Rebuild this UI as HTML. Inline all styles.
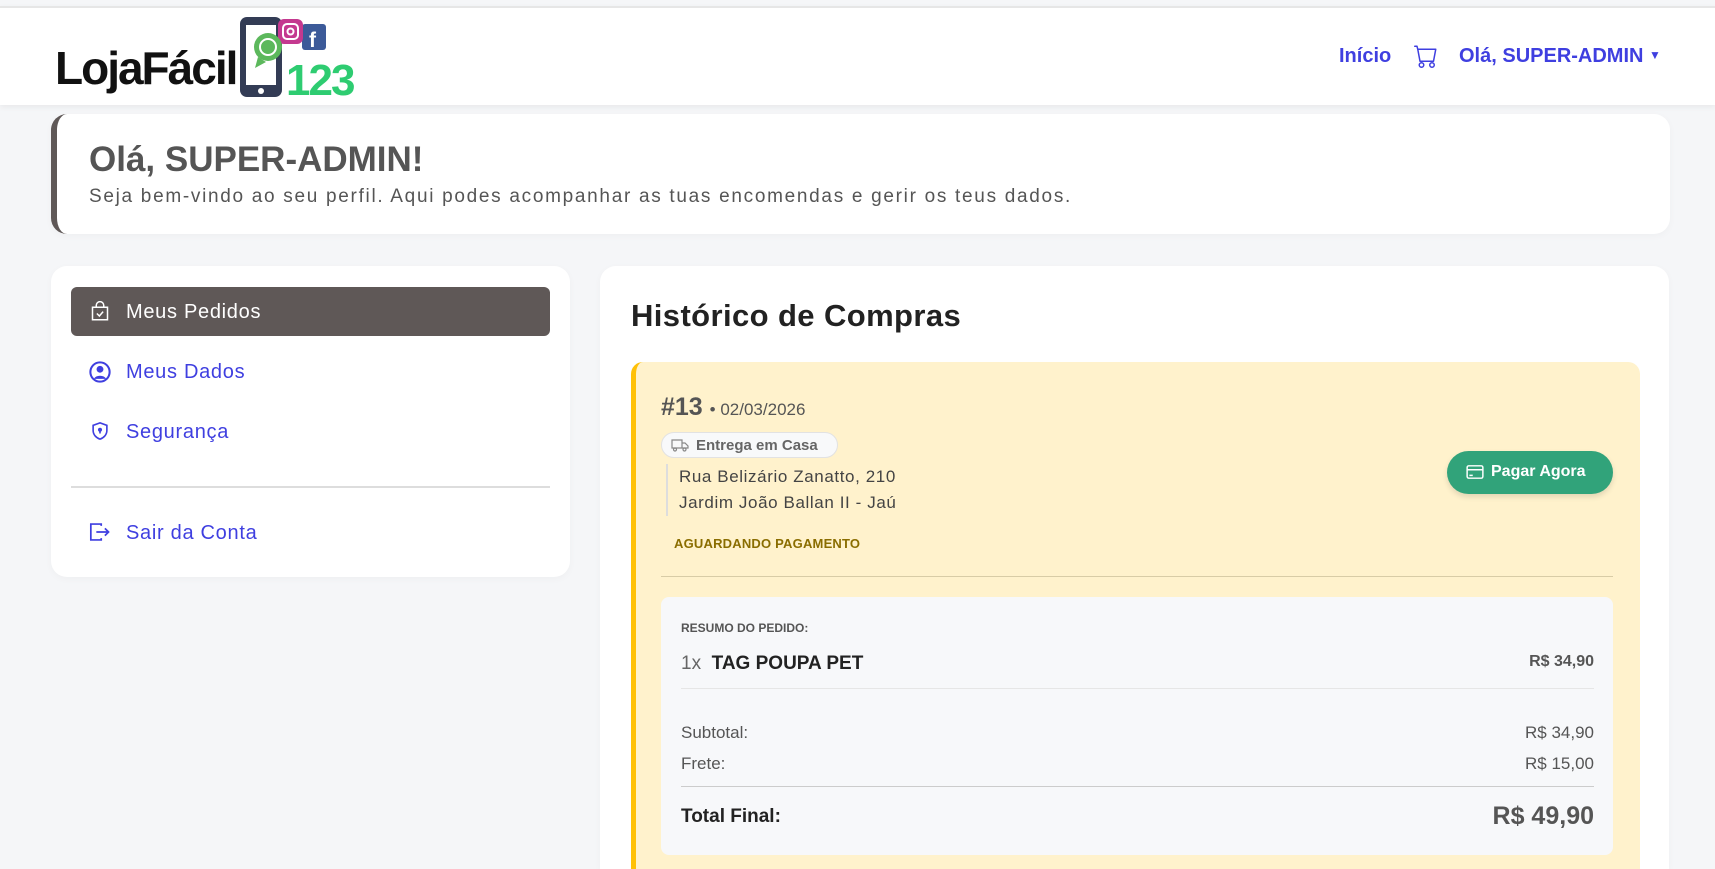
<!DOCTYPE html>
<html><head><meta charset="utf-8"><style>
*{box-sizing:border-box;margin:0;padding:0}
html{width:1715px;height:869px;overflow:hidden}
body{width:1715px;height:869px;overflow:hidden;background:#f5f6f8;font-family:"Liberation Sans",sans-serif;position:relative;color:#333}
.abs{position:absolute}
.nav{left:0;top:6px;width:1715px;height:99px;background:#fff;border-top:2px solid #e6e6e6;box-shadow:0 2px 6px rgba(0,0,0,.06)}
.card{background:#fff;border-radius:16px;box-shadow:0 2px 8px rgba(0,0,0,.03)}
.link{color:#3f3fe0}
.r{text-align:right}
</style></head><body>
<div class="abs nav"></div>
<!-- logo -->
<div class="abs" style="left:55px;top:41px;font-size:46px;font-weight:900;letter-spacing:-2px;color:#111;">LojaFácil</div>
<svg class="abs" style="left:236px;top:14px" width="125" height="84" viewBox="0 0 125 84">
<rect x="4" y="3" width="42" height="80" rx="7" fill="#333c55"/>
<rect x="10" y="11" width="30" height="60" fill="#fff"/>
<circle cx="25" cy="77" r="3" fill="#fff"/>
<rect x="66" y="10" width="24" height="26" rx="3" fill="#3c5a99"/>
<text x="73" y="33" font-size="21" font-weight="bold" fill="#fff" font-family="Liberation Sans">f</text>
<rect x="42" y="5" width="25" height="25" rx="6" fill="#c4398f"/>
<rect x="47" y="10" width="15" height="15" rx="4" fill="none" stroke="#fff" stroke-width="2"/>
<circle cx="54.5" cy="17.5" r="3" fill="none" stroke="#fff" stroke-width="2"/>
<circle cx="32" cy="33" r="14" fill="#5cb85c"/>
<path d="M22 43 l-3 11 l11-6z" fill="#5cb85c"/>
<circle cx="32" cy="33" r="8" fill="none" stroke="#fff" stroke-width="2"/>
<text x="50" y="81" font-size="44" font-weight="900" fill="#2ecc71" font-family="Liberation Sans" letter-spacing="-2">123</text>
</svg>
<div class="abs link" style="left:1339px;top:45px;font-size:20px;font-weight:bold;">Início</div>
<svg class="abs" style="left:1414px;top:44px" width="24" height="24" viewBox="0 0 16 16" fill="#3f3fe0"><path d="M0 1.5A.5.5 0 0 1 .5 1H2a.5.5 0 0 1 .485.379L2.89 3H14.5a.5.5 0 0 1 .491.592l-1.5 8A.5.5 0 0 1 13 12H4a.5.5 0 0 1-.491-.408L2.01 3.607 1.61 2H.5a.5.5 0 0 1-.5-.5zM3.102 4l1.313 7h8.17l1.313-7H3.102zM5 12a2 2 0 1 0 0 4 2 2 0 0 0 0-4zm7 0a2 2 0 1 0 0 4 2 2 0 0 0 0-4zm-7 1a1 1 0 1 1 0 2 1 1 0 0 1 0-2zm7 0a1 1 0 1 1 0 2 1 1 0 0 1 0-2z"/></svg>
<div class="abs link" style="left:1459px;top:45px;font-size:20px;font-weight:bold;">Olá, SUPER-ADMIN <span style="font-size:12px;vertical-align:3px">▼</span></div>

<!-- hero -->
<div class="abs card" style="left:51px;top:114px;width:1619px;height:120px;border-left:6px solid #5f5857;"></div>
<div class="abs" style="left:89px;top:140px;font-size:35px;font-weight:bold;color:#555;">Olá, SUPER-ADMIN!</div>
<div class="abs" style="left:89px;top:186px;font-size:19px;color:#555;letter-spacing:1.7px;">Seja bem-vindo ao seu perfil. Aqui podes acompanhar as tuas encomendas e gerir os teus dados.</div>

<!-- sidebar -->
<div class="abs card" style="left:51px;top:266px;width:519px;height:311px;"></div>
<div class="abs" style="left:71px;top:287px;width:479px;height:49px;background:#5f5857;border-radius:6px;"></div>
<svg class="abs" style="left:90px;top:301px" width="20" height="20" viewBox="0 0 16 16" fill="none" stroke="#fff" stroke-width="1.2"><rect x="2" y="5" width="12" height="10"/><path d="M5 5V3.5a3 3 0 0 1 6 0V5M5.5 10l2 2 3-3.5"/></svg>
<div class="abs" style="left:126px;top:301px;font-size:20px;color:#fff;letter-spacing:0.7px;">Meus Pedidos</div>
<svg class="abs" style="left:89px;top:361px" width="22" height="22" viewBox="0 0 16 16"><circle cx="8" cy="8" r="7" fill="none" stroke="#3f3fe0" stroke-width="1.5"/><circle cx="8" cy="6" r="2.5" fill="#3f3fe0"/><path d="M3.5 13a5 4 0 0 1 9 0z" fill="#3f3fe0"/></svg>
<div class="abs link" style="left:126px;top:361px;font-size:20px;letter-spacing:0.7px;">Meus Dados</div>
<svg class="abs" style="left:90px;top:421px" width="20" height="20" viewBox="0 0 16 16" fill="none" stroke="#3f3fe0" stroke-width="1.3"><path d="M8 1.5 2.5 3.5v4c0 3.5 2.5 6 5.5 7 3-1 5.5-3.5 5.5-7v-4z"/><circle cx="8" cy="7" r="1" fill="#3f3fe0"/><path d="M8 8v2"/></svg>
<div class="abs link" style="left:126px;top:421px;font-size:20px;letter-spacing:0.7px;">Segurança</div>
<div class="abs" style="left:71px;top:486px;width:479px;height:2px;background:#ddd;"></div>
<svg class="abs" style="left:89px;top:522px" width="22" height="20" viewBox="0 0 18 16" fill="none" stroke="#3f3fe0" stroke-width="1.4"><path d="M10 3V1.5H1.5v13H10V13M6 8h10M13 5l3 3-3 3"/></svg>
<div class="abs link" style="left:126px;top:522px;font-size:20px;letter-spacing:0.7px;">Sair da Conta</div>

<!-- main -->
<div class="abs card" style="left:600px;top:266px;width:1069px;height:603px;border-radius:16px 16px 0 0;"></div>
<div class="abs" style="left:631px;top:298px;font-size:31px;font-weight:bold;color:#222;letter-spacing:0.4px;">Histórico de Compras</div>
<div class="abs" style="left:631px;top:362px;width:1009px;height:507px;background:#fff2cc;border-left:5px solid #ffc107;border-radius:12px 12px 0 0;"></div>
<div class="abs" style="left:661px;top:393px;font-size:25px;font-weight:bold;color:#555;">#13 <span style="font-size:17px;font-weight:normal;color:#555;">• 02/03/2026</span></div>
<div class="abs" style="left:661px;top:432px;width:177px;height:26px;background:#f8f9fa;border:1px solid #e2e2e2;border-radius:13px;font-size:15px;font-weight:bold;color:#666;padding:4px 0 0 34px;">Entrega em Casa</div>
<svg class="abs" style="left:671px;top:437px" width="18" height="16" viewBox="0 0 18 16" fill="none" stroke="#888" stroke-width="1.2"><path d="M1 3h10v8H1zM11 6h3l3 3v2h-6z"/><circle cx="4" cy="12.5" r="1.5"/><circle cx="13.5" cy="12.5" r="1.5"/></svg>
<div class="abs" style="left:666px;top:464px;width:2px;height:52px;background:#ddd;"></div>
<div class="abs" style="left:679px;top:464px;font-size:17px;color:#444;line-height:26px;letter-spacing:0.6px;">Rua Belizário Zanatto, 210<br>Jardim João Ballan II - Jaú</div>
<div class="abs" style="left:674px;top:536px;font-size:13px;font-weight:bold;color:#8a6d00;letter-spacing:0.2px;">AGUARDANDO PAGAMENTO</div>
<div class="abs" style="left:1447px;top:451px;width:166px;height:43px;background:#31a37a;border-radius:22px;box-shadow:0 3px 6px rgba(0,0,0,.12);color:#fff;font-size:16px;font-weight:bold;padding:12px 0 0 44px;">Pagar Agora</div>
<svg class="abs" style="left:1466px;top:464px" width="18" height="16" viewBox="0 0 16 14" fill="none" stroke="#fff" stroke-width="1.3"><rect x="1" y="1.5" width="14" height="11" rx="1.5"/><path d="M1 5h14M3 10h3"/></svg>
<div class="abs" style="left:661px;top:576px;width:952px;height:1px;background:#d8cca6;"></div>
<div class="abs" style="left:661px;top:597px;width:952px;height:258px;background:#f7f8fa;border-radius:8px;"></div>
<div class="abs" style="left:681px;top:621px;font-size:12px;font-weight:bold;color:#555;">RESUMO DO PEDIDO:</div>
<div class="abs" style="left:681px;top:653px;font-size:19px;color:#222;"><span style="color:#666">1x</span>&nbsp; <b>TAG POUPA PET</b></div>
<div class="abs r" style="right:121px;top:653px;font-size:16px;font-weight:bold;color:#555;">R$ 34,90</div>
<div class="abs" style="left:681px;top:688px;width:913px;height:1px;background:#e6e6e6;"></div>
<div class="abs" style="left:681px;top:723px;font-size:17px;color:#555;">Subtotal:</div>
<div class="abs r" style="right:121px;top:723px;font-size:17px;color:#555;">R$ 34,90</div>
<div class="abs" style="left:681px;top:754px;font-size:17px;color:#555;">Frete:</div>
<div class="abs r" style="right:121px;top:754px;font-size:17px;color:#555;">R$ 15,00</div>
<div class="abs" style="left:681px;top:786px;width:913px;height:1px;background:#ccc;"></div>
<div class="abs" style="left:681px;top:806px;font-size:19px;font-weight:bold;color:#222;">Total Final:</div>
<div class="abs r" style="right:121px;top:802px;font-size:25px;font-weight:bold;color:#555;">R$ 49,90</div>
</body></html>
